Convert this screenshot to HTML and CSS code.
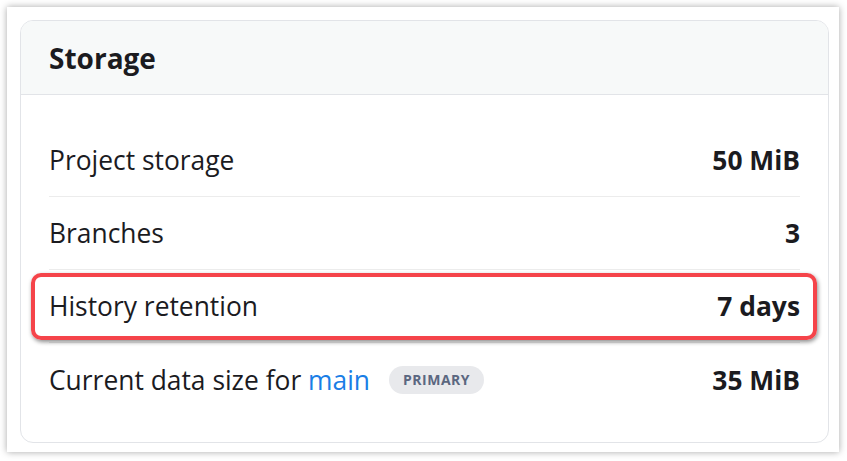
FILE: index.html
```html
<!DOCTYPE html>
<html>
<head>
<meta charset="utf-8">
<link rel="stylesheet" href="styles.css">
</head>
<body>
<div class="frame">
  <section class="card">
    <header class="card-head">
      <h2 class="card-title">Storage</h2>
    </header>
    <div class="card-body">
      <div class="row">
        <span class="label">Project storage</span>
        <span class="value">50 MiB</span>
      </div>
      <div class="row">
        <span class="label">Branches</span>
        <span class="value">3</span>
      </div>
      <div class="row highlighted">
        <span class="label">History retention</span>
        <span class="value">7 days</span>
        <span class="highlight"></span>
      </div>
      <div class="row last">
        <span class="label">Current data size for <a class="link" href="#">main</a><span class="badge">PRIMARY</span></span>
        <span class="value">35 MiB</span>
      </div>
    </div>
  </section>
</div>
</body>
</html>
```

FILE: styles.css
```css
* { box-sizing: border-box; }
html, body { margin: 0; padding: 0; }
body {
  background: #ffffff;
  font-family: "Open Sans", "Noto Sans", sans-serif;
  color: #1b1b1f;
  width: 847px;
  height: 461px;
  overflow: hidden;
}
.frame {
  margin: 7px 8px 9px 7px;
  height: 445px;
  background: #fff;
  box-shadow: 0 0 7px rgba(0,0,0,0.35);
  padding: 13px 10px 9px 13px;
}
.card {
  border: 1px solid #e2e4e8;
  border-radius: 13px;
  height: 423px;
  overflow: visible;
}
.card-head {
  background: #f7f9f9;
  border-bottom: 1px solid #e2e4e8;
  border-radius: 12px 12px 0 0;
  height: 74px;
  padding: 0 28px;
  display: flex;
  align-items: center;
}
.card-title {
  margin: 0;
  font-size: 28px;
  font-weight: 700;
  line-height: 36px;
  padding-top: 1px;
}
.card-body {
  padding: 29px 28px 0 28px;
}
.row {
  position: relative;
  display: flex;
  justify-content: space-between;
  align-items: center;
  height: 73px;
  border-bottom: 1px solid #ececec;
  font-size: 26.4px;
  line-height: 34px;
}
.row.last { border-bottom: none; }
.label { display: flex; align-items: center; white-space: pre; }
.value { font-weight: 700; }
.link { color: #1a7ee6; text-decoration: none; }
.badge {
  margin-left: 19px;
  background: #e8e9ec;
  color: #5b6780;
  font-size: 14px;
  font-weight: 700;
  letter-spacing: 0.5px;
  line-height: 28px;
  height: 28px;
  padding: 0 14px;
  border-radius: 14px;
}
.highlight {
  position: absolute;
  left: -18px;
  right: -17px;
  top: 3px;
  bottom: 2px;
  border: 4px solid #f5444a;
  border-radius: 10px;
  box-shadow: 1px 2px 4px rgba(0,0,0,0.45);
  pointer-events: none;
}
```
